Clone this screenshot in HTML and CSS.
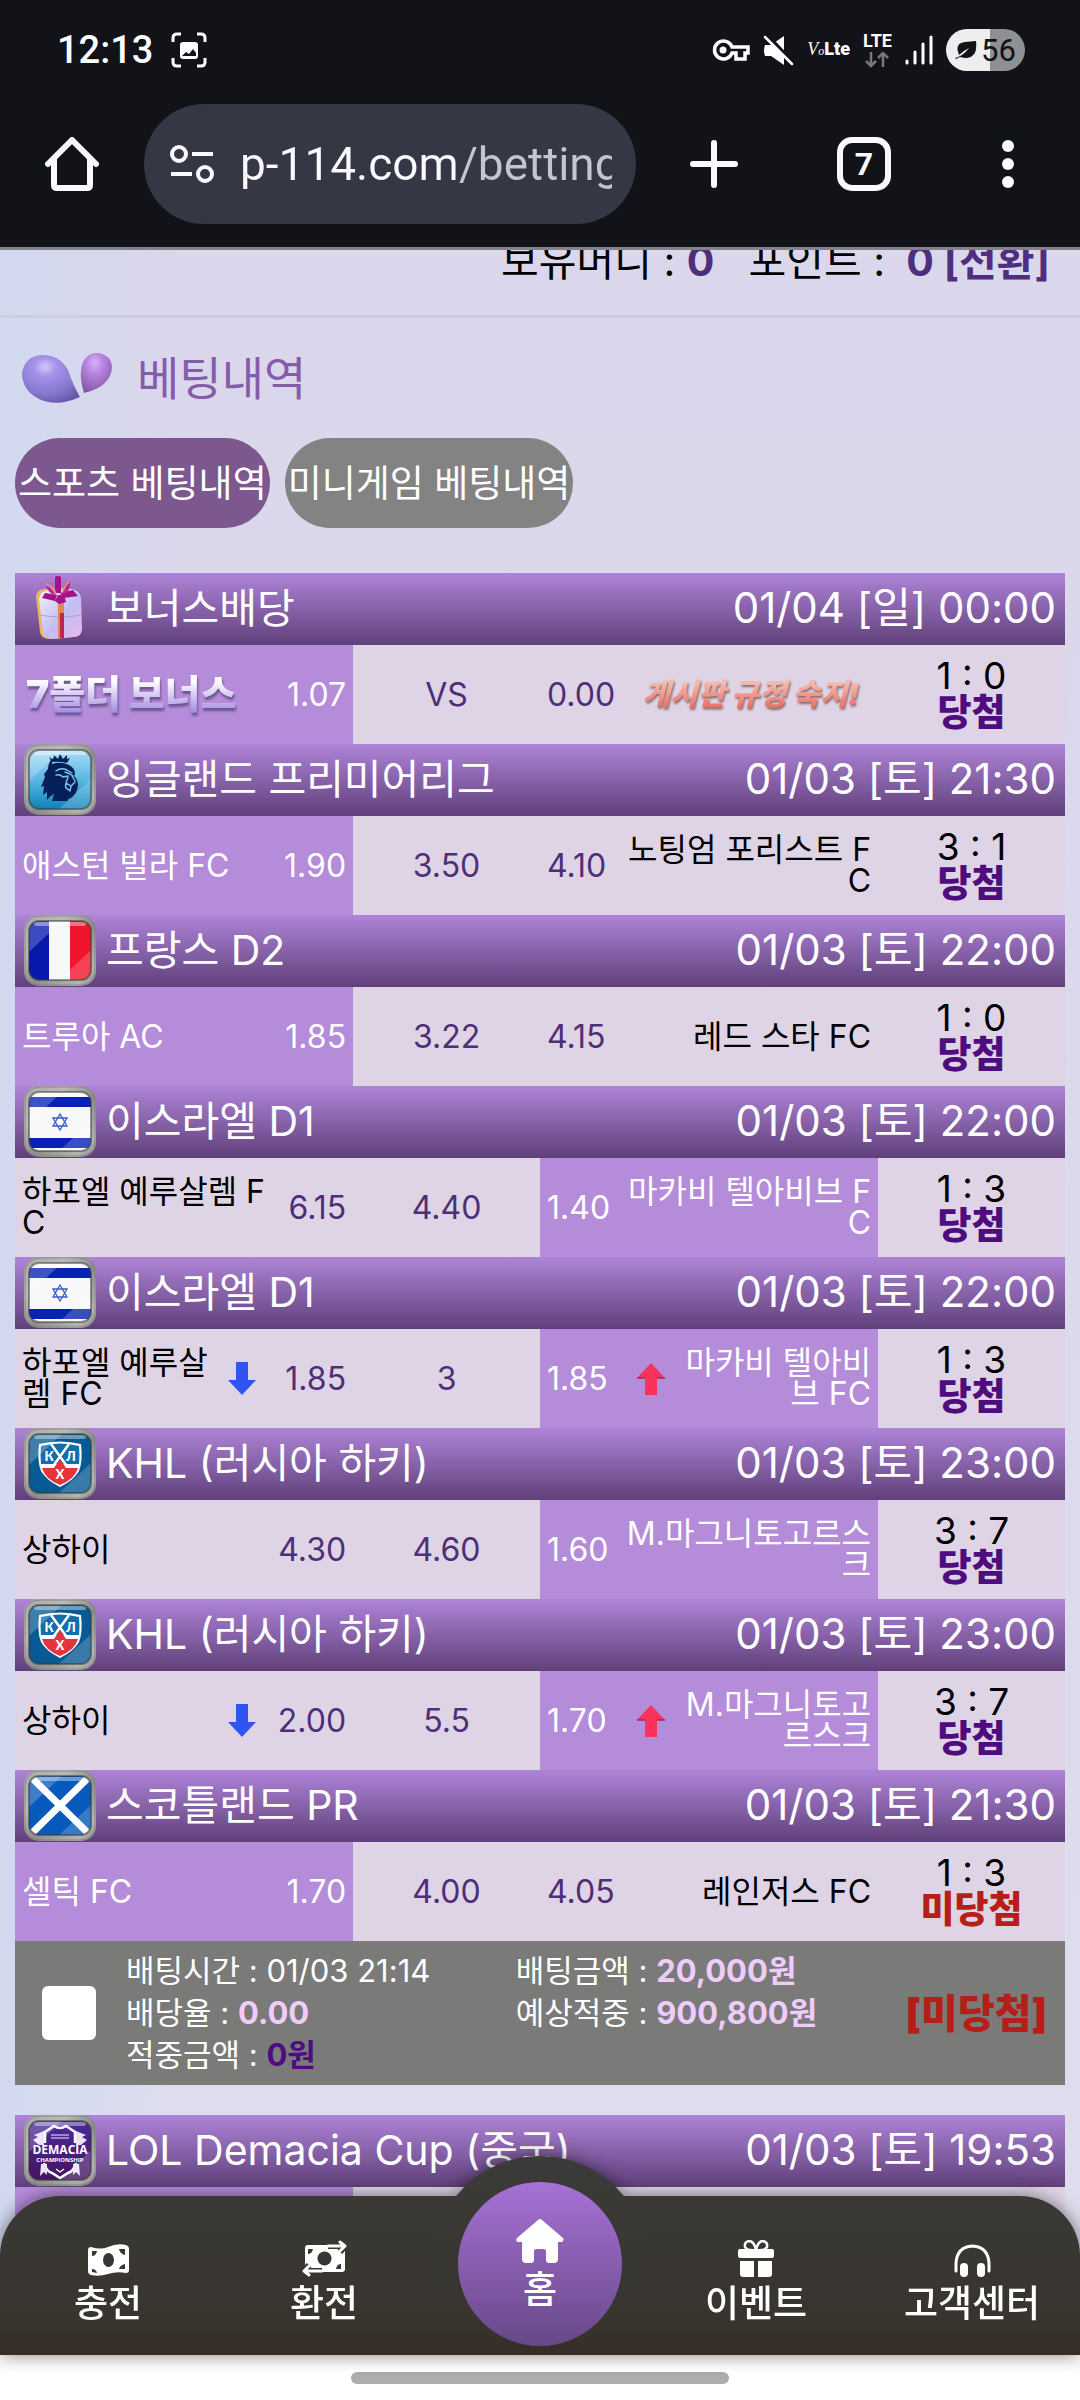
FILE: index.html
```html
<!DOCTYPE html>
<html lang="ko">
<head>
    <meta charset="UTF-8">
    <meta name="viewport" content="width=device-width, initial-scale=1.0">
    <title>베팅내역</title>
    <link rel="stylesheet" href="styles.css">
</head>
<body>
    <!-- shared icons -->
    <svg class="sprite" aria-hidden="true">
        <defs>
            <linearGradient id="frame" x1="0" y1="0" x2="1" y2="1">
                <stop offset="0" stop-color="#a9a9a6"/>
                <stop offset=".3" stop-color="#b9b9b6"/>
                <stop offset=".55" stop-color="#8d8d8b"/>
                <stop offset=".85" stop-color="#b4b4b1"/>
                <stop offset="1" stop-color="#8b8b89"/>
            </linearGradient>
            <linearGradient id="epl-bg" x1="0" y1="0" x2="0" y2="1">
                <stop offset="0" stop-color="#a9dcf8"/>
                <stop offset=".5" stop-color="#5bb7e2"/>
                <stop offset="1" stop-color="#0e82b8"/>
            </linearGradient>
            <linearGradient id="lol-bg" x1="0" y1="0" x2="0" y2="1">
                <stop offset="0" stop-color="#4b2a9b"/>
                <stop offset="1" stop-color="#44145f"/>
            </linearGradient>
            <linearGradient id="box" x1="0" y1="0" x2="1" y2="1">
                <stop offset="0" stop-color="#f4f2fb"/>
                <stop offset=".55" stop-color="#c3bdf3"/>
                <stop offset="1" stop-color="#e9b9ea"/>
            </linearGradient>
            <radialGradient id="drop-blue" cx=".4" cy=".25" r=".8">
                <stop offset="0" stop-color="#d3c8fa"/>
                <stop offset=".25" stop-color="#a592ea"/>
                <stop offset=".7" stop-color="#8677cd"/>
                <stop offset="1" stop-color="#6857a4"/>
            </radialGradient>
            <radialGradient id="drop-pink" cx=".45" cy=".25" r=".8">
                <stop offset="0" stop-color="#d9b0f5"/>
                <stop offset=".35" stop-color="#b784e0"/>
                <stop offset="1" stop-color="#7d559f"/>
            </radialGradient>
            <clipPath id="inner"><rect x="5" y="6" width="62" height="59" rx="10"/></clipPath>
        </defs>
        <symbol id="gloss" viewBox="0 0 72 72">
            <g clip-path="url(#inner)">
                <path d="M5 6h33L5 37z" fill="#fff" opacity=".22"/>
                <path d="M67 35L35 65h32z" fill="#fff" opacity=".2"/>
                <path d="M12 9h48" stroke="#fff" stroke-width="4" stroke-linecap="round" opacity=".4"/>
            </g>
            <rect x="5" y="6" width="62" height="59" rx="10" fill="none" stroke="#333" stroke-width="2" opacity=".5"/>
            <rect x="1" y="1" width="70" height="69" rx="14" fill="none" stroke="#777" stroke-width="1" opacity=".7"/>
        </symbol>
        <symbol id="epl" viewBox="0 0 72 72">
            <rect width="72" height="71" rx="15" fill="url(#frame)"/>
            <rect x="5" y="6" width="62" height="59" rx="10" fill="url(#epl-bg)"/>
            <path d="M27 18l-2-5 4 2 1-4 4 4 2-5 3 5 4-4v4l3-1-3 5q-8-2-16-1z" fill="#051f58"/>
            <path d="M28 20q9-3 17 1 6 3 6 9l-1 2q4 4 4 9-1 9-7 13l-3 1v2H28l2-7q-4 2-7 6v-8l-4 3 1-9-3 1 4-10-1-3 4-5q0-6 4-10z" fill="#051f58"/>
            <path d="M32 27q5-4 11-1l5 3M32 31q4-1 7 2l5-1M41 28q4 1 8 4M44 33l-2 6 5 3 4-4M42 39q-2 5 3 7M48 32l3 5M47 42l-1 5" fill="none" stroke="#7cc6ea" stroke-width="1.4" stroke-linecap="round"/>
            <use href="#gloss" width="72" height="72"/>
        </symbol>
        <symbol id="france" viewBox="0 0 72 72">
            <rect width="72" height="71" rx="15" fill="url(#frame)"/>
            <g clip-path="url(#inner)">
                <path d="M5 6h20v59H5z" fill="#0619ab"/>
                <path d="M25 6h21v59H25z" fill="#f7f7f7"/>
                <path d="M46 6h21v59H46z" fill="#f0152a"/>
            </g>
            <use href="#gloss" width="72" height="72"/>
        </symbol>
        <symbol id="israel" viewBox="0 0 72 72">
            <rect width="72" height="71" rx="15" fill="url(#frame)"/>
            <g clip-path="url(#inner)">
                <path d="M5 6h62v59H5z" fill="#f8f8f8"/>
                <path d="M5 11h62v10H5zM5 52h62v10H5z" fill="#0722b4"/>
            </g>
            <path d="M36 28l7 12H29zM36 44l-7-12h14z" fill="none" stroke="#3c5cc4" stroke-width="1.3"/>
            <use href="#gloss" width="72" height="72"/>
        </symbol>
        <symbol id="scotland" viewBox="0 0 72 72">
            <rect width="72" height="71" rx="15" fill="url(#frame)"/>
            <g clip-path="url(#inner)">
                <path d="M5 6h62v59H5z" fill="#0759bb"/>
                <path d="M7 7l58 57M65 7L7 64" stroke="#fff" stroke-width="7"/>
            </g>
            <use href="#gloss" width="72" height="72"/>
        </symbol>
        <symbol id="khl" viewBox="0 0 72 72">
            <rect width="72" height="71" rx="15" fill="url(#frame)"/>
            <rect x="5" y="6" width="62" height="59" rx="10" fill="#075a93"/>
            <path d="M15 16q21-5 42 0 2 17-2 27-5 9-19 16-14-7-19-16-4-10-2-27z" fill="#fff"/>
            <path d="M17 18q19-5 38 0 1 9 0 18H17q-1-9 0-18z" fill="#126eac"/>
            <path d="M27 16l18 25M45 16L27 41" stroke="#fff" stroke-width="2.5"/>
            <path d="M18 40h12l6-9 6 9h12q-3 11-18 17-15-6-18-17z" fill="#e5333b"/>
            <use href="#gloss" width="72" height="72"/>
        </symbol>
        <symbol id="demacia" viewBox="0 0 72 72">
            <rect width="72" height="71" rx="15" fill="url(#frame)"/>
            <rect x="5" y="6" width="62" height="59" rx="10" fill="url(#lol-bg)"/>
            <path d="M21 28V17l9-6q6 4 12 0l9 6v11M20 48q2 8 8 10l8 5 8-5q6-2 8-10" fill="none" stroke="#fff" stroke-width="2.5"/>
            <path d="M20 16l-10 4 4 2-5 3 6 5h5zM52 16l10 4-4 2 5 3-6 5h-5zM17 49h6v11l-3-3-4 4zM55 49h-6v11l3-3 4 4z" fill="#e9e3f5"/>
            <path d="M27 20h18M27 23h18" stroke="#b9a7dd" stroke-width="1.5"/>
            <path d="M32 54l4 3 4-3" fill="none" stroke="#fff" stroke-width="1.2"/>
            <use href="#gloss" width="72" height="72"/>
        </symbol>
        <symbol id="gift-box" viewBox="0 0 72 72">
            <path d="M12 23q1-7 9-7l22-1q9 1 11 8l3 33q0 7-8 8l-23 2q-9 0-10-7z" fill="#e9b765"/>
            <path d="M15 26q1-8 10-9l22-1q9 1 10 9l1 31q0 7-8 8l-21 2q-9 0-10-7z" fill="url(#box)"/>
            <path d="M15 42q22 4 43 0" fill="none" stroke="#aaa2d8"/>
            <path d="M34 26h6v39h-6z" fill="#bd2748"/>
            <path d="M34 26h2v39h-2zM34 28h6v12h-6z" fill="#dc8a55"/>
            <path d="M31 4q3-2 6 0v16h-6zM34 22l-13-2-3 5 13 3zM36 20l13-3 5 6-14 2zM33 22h7l2 7-7 2-4-3z" fill="#a31287"/>
            <path d="M22 12q4-3 8 5l2 5q-8-1-10-10zM46 9q-5-1-7 7v6q8-4 7-13z" fill="#b8249a"/>
            <path d="M22 11q6 2 10 10M45 9q-4 3-6 9" stroke="#ea8d7d" stroke-width="2" fill="none"/>
        </symbol>
        <symbol id="arrow-down" viewBox="0 0 28 33">
            <path d="M8 0h12v18h8L14 33 0 18h8z" fill="#3054f2"/>
        </symbol>
        <symbol id="arrow-up" viewBox="0 0 28 33">
            <path d="M8 33h12V16h8L14 1 0 16h8z" fill="#f9335c"/>
            <path d="M0 16h8M20 16h8" stroke="#9e2a63" stroke-width="1.5"/>
        </symbol>
    </svg>

    <header class="browser">
        <div class="status-bar">
            <div class="status-left">
                <span class="clock">12:13</span>
                <svg width="36" height="36" viewBox="0 0 36 36">
                    <path d="M2 10V6q0-4 4-4h4M26 2h4q4 0 4 4v4M34 26v4q0 4-4 4h-4M10 34H6q-4 0-4-4v-4" fill="none" stroke="#fff" stroke-width="3"/>
                    <rect x="9" y="10" width="18" height="17" rx="3" fill="#fff"/>
                    <path d="M11 24l4-4 3 2 4-5 3 4v3z" fill="#111318"/>
                </svg>
            </div>
            <div class="status-right">
                <svg width="38" height="24" viewBox="0 0 38 24">
                    <path d="M20 9a9 9 0 1 0 0 6h4v6h9v-6h3V9z" fill="none" stroke="#fff" stroke-width="3.5"/>
                    <circle cx="11" cy="12" r="3.5" fill="#fff"/>
                </svg>
                <svg width="31" height="31" viewBox="0 0 31 31">
                    <path d="M2 10h6l13-9v29L8 21H2q-2-5 0-11z" fill="#fff"/>
                    <path d="M3 -1l28 30" stroke="#111318" stroke-width="4"/>
                    <path d="M2 2l27 27" stroke="#fff" stroke-width="2.5" stroke-linecap="round"/>
                </svg>
                <span class="volte"><i>V<small>o</small></i><b>Lte</b></span>
                <span class="lte">
                    LTE
                    <svg width="24" height="16" viewBox="0 0 24 16">
                        <path d="M6 0v14M1 9l5 5 5-5M18 15V1M13 6l5-5 5 5" fill="none" stroke="#77787c" stroke-width="2.5"/>
                    </svg>
                </span>
                <svg width="28" height="30" viewBox="0 0 28 30">
                    <path d="M2 26v2M10 17v11M18 9v19M26 2v26" stroke="#fff" stroke-width="3" stroke-linecap="round"/>
                </svg>
                <span class="battery">
                    <svg width="22" height="20" viewBox="0 0 22 20">
                        <path d="M21 1q2 16-9 17-4 0-7-1l-4 2-1-1Q8 16 14 8 8 11 4 15-1 3 10 2z" fill="#111318"/>
                    </svg>
                    56
                </span>
            </div>
        </div>
        <div class="toolbar">
            <button class="icon-btn" aria-label="홈">
                <svg width="54" height="54" viewBox="0 0 54 54">
                    <path d="M3 27L27 3l24 24M9 22v26q0 3 3 3h30q3 0 3-3V22" fill="none" stroke="#fbf9ff" stroke-width="6" stroke-linejoin="round" stroke-linecap="round"/>
                </svg>
            </button>
            <label class="address">
                <svg width="46" height="40" viewBox="0 0 46 40">
                    <g fill="none" stroke="#fbf9ff" stroke-width="4">
                        <circle cx="10" cy="10" r="7"/>
                        <path d="M23 10h21M2 30h21"/>
                        <circle cx="36" cy="30" r="7"/>
                    </g>
                </svg>
                <input type="text" value="p-114.com/betting" aria-label="주소">
            </label>
            <div class="toolbar-actions">
                <button class="icon-btn" aria-label="새 탭">
                    <svg width="48" height="48" viewBox="0 0 48 48">
                        <path d="M24 3v42M3 24h42" stroke="#fbf9ff" stroke-width="6" stroke-linecap="round"/>
                    </svg>
                </button>
                <button class="icon-btn tab-count">7</button>
                <button class="icon-btn" aria-label="메뉴">
                    <svg width="36" height="48" viewBox="0 0 36 48">
                        <g fill="#fbf9ff"><circle cx="18" cy="6" r="6"/><circle cx="18" cy="24" r="6"/><circle cx="18" cy="42" r="6"/></g>
                    </svg>
                </button>
            </div>
        </div>
    </header>

    <div class="balance">
        <span>보유머니 : <b>0</b></span>
        <span>포인트 : <b>&nbsp;0 <a href="#">[전환]</a></b></span>
    </div>

    <main>
        <div class="page-title">
            <svg width="90" height="50" viewBox="0 0 90 50">
                <path d="M58 44Q38 53 22 48 0 40 0 20 3 3 20 2q18 0 26 15 5 15 12 27z" fill="url(#drop-blue)"/>
                <path d="M62 40Q56 20 61 9 66-1 77 0q13 3 13 15-2 19-28 25z" fill="url(#drop-pink)"/>
            </svg>
            <h1>베팅내역</h1>
        </div>

        <div class="tabs">
            <button class="tab active">스포츠 베팅내역</button>
            <button class="tab">미니게임 베팅내역</button>
        </div>

        <section class="slip">
            <table class="bets">
                <colgroup><col class="team-col"><col class="draw-col"><col class="team-col"><col class="draw-col"></colgroup>
                <tr class="league">
                    <th colspan="4"><div class="league-bar"><svg class="badge"><use href="#gift-box"/></svg><span class="league-name">보너스배당</span><time>01/04 [일] 00:00</time></div></th>
                </tr>
                <tr class="match">
                    <td class="picked"><div class="side"><span class="name bonus">7폴더 보너스</span><span class="odds">1.07</span></div></td>
                    <td class="draw">VS</td>
                    <td><div class="side away"><span class="odds">0.00</span><span class="name notice">게시판 규정 숙지!</span></div></td>
                    <td class="result">1 : 0<strong class="win">당첨</strong></td>
                </tr>
                <tr class="league">
                    <th colspan="4"><div class="league-bar"><svg class="badge"><use href="#epl"/></svg><span class="league-name">잉글랜드 프리미어리그</span><time>01/03 [토] 21:30</time></div></th>
                </tr>
                <tr class="match">
                    <td class="picked"><div class="side"><span class="name">애스턴 빌라 FC</span><span class="odds">1.90</span></div></td>
                    <td class="draw">3.50</td>
                    <td><div class="side away"><span class="odds">4.10</span><span class="name">노팅엄 포리스트 FC</span></div></td>
                    <td class="result">3 : 1<strong class="win">당첨</strong></td>
                </tr>
                <tr class="league">
                    <th colspan="4"><div class="league-bar"><svg class="badge"><use href="#france"/></svg><span class="league-name">프랑스 D2</span><time>01/03 [토] 22:00</time></div></th>
                </tr>
                <tr class="match">
                    <td class="picked"><div class="side"><span class="name">트루아 AC</span><span class="odds">1.85</span></div></td>
                    <td class="draw">3.22</td>
                    <td><div class="side away"><span class="odds">4.15</span><span class="name">레드 스타 FC</span></div></td>
                    <td class="result">1 : 0<strong class="win">당첨</strong></td>
                </tr>
                <tr class="league">
                    <th colspan="4"><div class="league-bar"><svg class="badge"><use href="#israel"/></svg><span class="league-name">이스라엘 D1</span><time>01/03 [토] 22:00</time></div></th>
                </tr>
                <tr class="match">
                    <td><div class="side"><span class="name">하포엘 예루살렘 FC</span><span class="odds">6.15</span></div></td>
                    <td class="draw">4.40</td>
                    <td class="picked"><div class="side away"><span class="odds">1.40</span><span class="name">마카비 텔아비브 FC</span></div></td>
                    <td class="result">1 : 3<strong class="win">당첨</strong></td>
                </tr>
                <tr class="league">
                    <th colspan="4"><div class="league-bar"><svg class="badge"><use href="#israel"/></svg><span class="league-name">이스라엘 D1</span><time>01/03 [토] 22:00</time></div></th>
                </tr>
                <tr class="match">
                    <td><div class="side"><span class="name short">하포엘 예루살렘 FC</span><svg class="arrow"><use href="#arrow-down"/></svg><span class="odds">1.85</span></div></td>
                    <td class="draw">3</td>
                    <td class="picked"><div class="side away"><span class="odds">1.85</span><svg class="arrow"><use href="#arrow-up"/></svg><span class="name short">마카비 텔아비브 FC</span></div></td>
                    <td class="result">1 : 3<strong class="win">당첨</strong></td>
                </tr>
                <tr class="league">
                    <th colspan="4"><div class="league-bar"><svg class="badge"><use href="#khl"/><text x="25" y="33" class="badge-letter">К</text><text x="47" y="33" class="badge-letter">Л</text><text x="36" y="51" class="badge-letter">Х</text></svg><span class="league-name">KHL (러시아 하키)</span><time>01/03 [토] 23:00</time></div></th>
                </tr>
                <tr class="match">
                    <td><div class="side"><span class="name">상하이</span><span class="odds">4.30</span></div></td>
                    <td class="draw">4.60</td>
                    <td class="picked"><div class="side away"><span class="odds">1.60</span><span class="name">M.마그니토고르스크</span></div></td>
                    <td class="result">3 : 7<strong class="win">당첨</strong></td>
                </tr>
                <tr class="league">
                    <th colspan="4"><div class="league-bar"><svg class="badge"><use href="#khl"/><text x="25" y="33" class="badge-letter">К</text><text x="47" y="33" class="badge-letter">Л</text><text x="36" y="51" class="badge-letter">Х</text></svg><span class="league-name">KHL (러시아 하키)</span><time>01/03 [토] 23:00</time></div></th>
                </tr>
                <tr class="match">
                    <td><div class="side"><span class="name short">상하이</span><svg class="arrow"><use href="#arrow-down"/></svg><span class="odds">2.00</span></div></td>
                    <td class="draw">5.5</td>
                    <td class="picked"><div class="side away"><span class="odds">1.70</span><svg class="arrow"><use href="#arrow-up"/></svg><span class="name short">M.마그니토고르스크</span></div></td>
                    <td class="result">3 : 7<strong class="win">당첨</strong></td>
                </tr>
                <tr class="league">
                    <th colspan="4"><div class="league-bar"><svg class="badge"><use href="#scotland"/></svg><span class="league-name">스코틀랜드 PR</span><time>01/03 [토] 21:30</time></div></th>
                </tr>
                <tr class="match">
                    <td class="picked"><div class="side"><span class="name">셀틱 FC</span><span class="odds">1.70</span></div></td>
                    <td class="draw">4.00</td>
                    <td><div class="side away"><span class="odds">4.05</span><span class="name">레인저스 FC</span></div></td>
                    <td class="result">1 : 3<strong class="lose">미당첨</strong></td>
                </tr>
            </table>
            <div class="slip-summary">
                <input type="checkbox" aria-label="선택">
                <div class="slip-info">
                    <span>배팅시간 : 01/03 21:14</span>
                    <span>배팅금액 : <b>20,000원</b></span>
                    <span>배당율 : <b>0.00</b></span>
                    <span>예상적중 : <b>900,800원</b></span>
                    <span>적중금액 : <b class="won">0원</b></span>
                </div>
                <strong class="slip-result">[미당첨]</strong>
            </div>
        </section>

        <section class="slip">
            <table class="bets">
                <colgroup><col class="team-col"><col class="draw-col"><col class="team-col"><col class="draw-col"></colgroup>
                <tr class="league">
                    <th colspan="4"><div class="league-bar"><svg class="badge"><use href="#demacia"/><text x="36" y="39" class="badge-name">DEMACIA</text><text x="36" y="47" class="badge-sub">CHAMPIONSHIP</text></svg><span class="league-name">LOL Demacia Cup (중국)</span><time>01/03 [토] 19:53</time></div></th>
                </tr>
                <tr class="match">
                    <td class="picked"></td>
                    <td></td>
                    <td></td>
                    <td></td>
                </tr>
            </table>
        </section>
    </main>

    <footer class="bottom">
        <nav class="bottom-nav">
            <a href="#">
                <svg width="41" height="33" viewBox="0 0 41 33">
                    <path d="M3 3q10 3 17 0 9-4 18-2 3 1 3 4v21q0 3-3 3-9-2-18 1-9 3-17 1-3-1-3-4V6q0-3 3-3z" fill="#fff"/>
                    <g fill="#383632"><ellipse cx="20.500" cy="16" rx="5.500" ry="7"/><path d="M4 7h5q-1 5-5 5zM37 5h-6q1 5 6 6zM4 25q4 0 5 4l-5-1zM37 20q-5 1-6 5h6z"/></g>
                </svg>
                충전
            </a>
            <a href="#">
                <svg width="45" height="37" viewBox="0 0 45 37">
                    <path d="M6 5h36q1 1 1 3v21q0 3-3 3H6q-3 0-3-3V8q0-3 3-3z" fill="#fff"/>
                    <g fill="#383632"><circle cx="22.500" cy="18.500" r="7"/><path d="M6 9h5q-1 5-5 5zM39 29h-5q1-5 5-5z"/></g>
                    <path d="M26 6h17M38 1l5 5-5 6M20 31H2M7 25l-5 6 5 5" fill="none" stroke="#383632" stroke-width="6"/>
                    <path d="M26 6h17M38 2l5 4-5 5M20 31H2M7 26l-5 5 5 4" fill="none" stroke="#fff" stroke-width="3" stroke-linecap="round" stroke-linejoin="round"/>
                </svg>
                환전
            </a>
            <a href="#" class="home">
                <svg width="48" height="44" viewBox="0 0 48 44">
                    <path d="M22 1q2-2 4 0l21 18q1 1 0 3l-1 1h-4v17q0 4-4 4h-5q-3 0-3-3V32q0-2-3-2h-6q-3 0-3 2v9q0 3-3 3h-5q-4 0-4-4V23H2q-3-1-1-4z" fill="#fff"/>
                </svg>
                홈
            </a>
            <a href="#">
                <svg width="36" height="37" viewBox="0 0 36 37">
                    <path d="M18 10q-9 1-11-3-1-5 4-6 5 0 7 9 2-9 7-9 5 1 4 6-2 4-11 3z" fill="none" stroke="#fff" stroke-width="2.500"/>
                    <path d="M2 9h32q2 0 2 2v5q0 2-2 2H2q-2 0-2-2v-5q0-2 2-2zM2 21h14v16H5q-3 0-3-3zM20 21h14v13q0 3-3 3H20z" fill="#fff"/>
                </svg>
                이벤트
            </a>
            <a href="#">
                <svg width="37" height="33" viewBox="0 0 37 33">
                    <path d="M2 27v-8q1-16 16.500-17Q34 3 35 19v8" fill="none" stroke="#fff" stroke-width="3" stroke-linecap="round"/>
                    <rect x="6" y="19" width="8" height="14" rx="4" fill="#fff"/>
                    <rect x="23" y="19" width="8" height="14" rx="4" fill="#fff"/>
                </svg>
                고객센터
            </a>
        </nav>
        <div class="gesture-bar"><span></span></div>
    </footer>
</body>
</html>
```
FILE: styles.css
```css
* {
    box-sizing: border-box;
}

body {
    margin: 0;
    min-height: 100vh;
    font-family: Inter, "Noto Sans CJK KR", sans-serif;
    color: #000;
    background: linear-gradient(to right, #d2d9ef 0, rgba(218, 217, 236, 0) 180px), linear-gradient(#dbd6eb, #dad8ec 35%, #dedeed);
}

button {
    border: none;
    padding: 0;
    background: none;
    font-family: inherit;
    cursor: pointer;
}

a {
    color: inherit;
    text-decoration: none;
}

svg {
    display: block;
    flex-shrink: 0;
}

.sprite {
    position: absolute;
    width: 0;
    height: 0;
}

/* browser chrome */
.browser {
    background-color: #111318;
    border-bottom: 3px solid #83838b;
    color: #fff;
    font-family: Roboto, sans-serif;
}

.status-bar {
    display: flex;
    justify-content: space-between;
    align-items: center;
    height: 100px;
    padding: 0 55px 0 57px;
}

.status-left,
.status-right {
    display: flex;
    align-items: center;
}

.status-left {
    gap: 18px;
}

.status-right {
    gap: 13px;
}

.clock {
    font-size: 38px;
    font-weight: 500;
}

.volte {
    font-size: 18px;
    line-height: 24px;
}

.volte i {
    font-family: "Liberation Serif", serif;
}

.volte b {
    font-weight: 900;
}

.volte small {
    font-size: 12px;
}

.lte {
    display: flex;
    flex-direction: column;
    align-items: center;
    gap: 2px;
    font-size: 18px;
    font-weight: 700;
    line-height: 18px;
}

.battery {
    display: flex;
    align-items: center;
    justify-content: center;
    gap: 4px;
    width: 79px;
    height: 42px;
    border-radius: 21px;
    background: linear-gradient(to right, #eee 56%, #8f9092 56%);
    color: #111318;
    font-size: 31px;
}

.toolbar {
    display: flex;
    align-items: center;
    height: 147px;
    padding: 4px 54px 23px 45px;
    gap: 45px;
}

.address {
    display: flex;
    align-items: center;
    flex: 1;
    gap: 25px;
    min-width: 0;
    height: 120px;
    padding: 0 24px 0 25px;
    border-radius: 60px;
    background-color: #353745;
}

.address input {
    flex: 1;
    min-width: 0;
    padding: 0;
    border: none;
    outline: none;
    font: 46px/60px Roboto, sans-serif;
    color: transparent;
    background: linear-gradient(to right, #fbf9ff 215px, #c4c5d0 215px);
    -webkit-background-clip: text;
    background-clip: text;
}

.toolbar-actions {
    display: flex;
    align-items: center;
    gap: 99px;
    margin-left: 9px;
}

.tab-count {
    width: 54px;
    height: 54px;
    border: 6px solid #fbf9ff;
    border-radius: 15px;
    color: #fbf9ff;
    font-size: 32px;
    font-weight: 700;
    line-height: 42px;
}

/* account line, scrolled half under the toolbar */
.balance {
    display: flex;
    justify-content: flex-end;
    align-items: flex-end;
    gap: 34px;
    height: 68px;
    padding: 0 30px 34px;
    overflow: hidden;
    border-bottom: 3px solid #cfcbe0;
    font-size: 41px;
    line-height: 40px;
    white-space: nowrap;
}

.balance b {
    color: #4f2d7f;
    font-weight: 700;
}

main {
    padding: 0 15px;
}

.page-title {
    display: flex;
    align-items: center;
    gap: 25px;
    height: 120px;
    padding-left: 7px;
}

.page-title h1 {
    margin: 0;
    color: #855bab;
    font-size: 46px;
    font-weight: 400;
    line-height: 60px;
}

.tabs {
    display: flex;
    gap: 15px;
    margin-bottom: 45px;
}

.tab {
    height: 90px;
    padding: 0 3px 4px;
    border-radius: 45px;
    background-color: #838383;
    color: #fff;
    font-size: 37px;
    white-space: nowrap;
}

.tab.active {
    background-color: #7c588f;
}

/* betting slips */
.slip {
    margin-bottom: 30px;
}

.bets {
    width: 100%;
    table-layout: fixed;
    border-collapse: collapse;
}

.bets th,
.bets td {
    padding: 0;
    font-weight: 400;
}

.team-col {
    width: 32.2%;
}

.draw-col {
    width: 17.8%;
}

.league {
    background: linear-gradient(#ae84d8, #60407a);
    color: #fff;
}

.league-bar {
    display: flex;
    align-items: center;
    height: 72px;
    padding: 0 9px;
    font-size: 41px;
    line-height: 60px;
    text-align: left;
}

.badge {
    width: 72px;
    height: 72px;
    margin-right: 10px;
}

.badge-letter {
    fill: #fff;
    font: 900 13px Lato, sans-serif;
    text-anchor: middle;
}

.badge-name {
    fill: #fff;
    font: 700 12px "Open Sans", sans-serif;
    text-anchor: middle;
}

.badge-sub {
    fill: #fff;
    font: 700 6px "Open Sans", sans-serif;
    text-anchor: middle;
}

.league-name,
.league time {
    padding-bottom: 3px;
}

.league-name {
    flex: 1;
}

.league time {
    font-size: 42px;
}

.match {
    height: 99px;
    background-color: #dfd4e6;
}

.match .picked {
    background-color: #b48cd9;
}

.side {
    display: flex;
    align-items: center;
    justify-content: space-between;
    padding: 0 7px 1px;
}

.name {
    max-width: 248px;
    font-size: 32px;
    line-height: 31px;
    word-break: break-all;
}

.name.short {
    width: 190px;
}

.away .name {
    text-align: right;
}

.arrow {
    width: 28px;
    height: 33px;
    margin: 0 auto 0 16px;
}

.away .arrow {
    margin: 0 16px 0 auto;
}

.odds,
.draw {
    color: #4e2f77;
    font-size: 32px;
}

.draw {
    text-align: center;
}

.picked .name,
.picked .odds {
    color: #fff;
}

.side .name.bonus {
    padding-left: 4px;
    background: linear-gradient(#fff 20%, #a78fe6 90%);
    -webkit-background-clip: text;
    background-clip: text;
    color: transparent;
    font-size: 39px;
    font-weight: 900;
    line-height: 44px;
    white-space: nowrap;
    filter: drop-shadow(1px 3px 1px #6b568f);
}

.side .name.notice {
    padding-right: 12px;
    background: linear-gradient(#f5b9ab 20%, #e86f62 90%);
    -webkit-background-clip: text;
    background-clip: text;
    color: transparent;
    font-size: 30px;
    font-style: italic;
    font-weight: 900;
    line-height: 36px;
    white-space: nowrap;
    filter: drop-shadow(1px 2px 1px #8a6a70);
}

.bets .result {
    padding-bottom: 2px;
    font-size: 37px;
    line-height: 37px;
    text-align: center;
}

.result strong {
    display: block;
    font-size: 37px;
    font-weight: 900;
}

.win {
    color: #4e0c7f;
}

.lose,
.slip-result {
    color: #b61e19;
}

.slip-summary {
    display: flex;
    align-items: center;
    height: 144px;
    padding: 0 18px 0 27px;
    background-color: #7a7a78;
    color: #fff;
}

.slip-summary input {
    appearance: none;
    width: 54px;
    height: 54px;
    margin: 0 30px 0 0;
    border-radius: 6px;
    background-color: #fff;
}

.slip-info {
    display: grid;
    grid-template-columns: 1fr 1fr;
    flex: 1;
    font-size: 31px;
    line-height: 42px;
}

.slip-info b {
    color: #eeccfb;
    font-weight: 700;
}

.slip-info .won {
    color: #4e0c7f;
}

.slip-result {
    padding-bottom: 4px;
    font-size: 40px;
    font-weight: 900;
}

/* bottom menu */
.bottom {
    position: fixed;
    left: 0;
    right: 0;
    bottom: 0;
}

.bottom-nav {
    display: grid;
    grid-template-columns: repeat(5, 1fr);
    height: 159px;
    border-radius: 60px 60px 0 0;
    background: linear-gradient(#3b3936, #38352f 75%, #352d28);
    filter: drop-shadow(0 0 9px rgba(0, 0, 0, 0.5));
}

.bottom-nav a {
    display: flex;
    flex-direction: column;
    align-items: center;
    justify-content: flex-end;
    gap: 6px;
    padding-bottom: 30px;
    color: #fff;
    font-size: 37px;
    font-weight: 500;
    line-height: 42px;
}

/* raised round button in the middle of the bar */
.bottom-nav .home {
    position: relative;
    z-index: 0;
    padding-bottom: 44px;
}

.home::before,
.home::after {
    content: "";
    position: absolute;
    left: 50%;
    border-radius: 50%;
    transform: translateX(-50%);
}

.home::before {
    z-index: -2;
    top: -40px;
    width: 216px;
    height: 216px;
    background: linear-gradient(#3b3b39, #38352f 75%, transparent 75%);
}

.home::after {
    z-index: -1;
    top: -14px;
    width: 164px;
    height: 164px;
    background: linear-gradient(#a672d6, #684888);
}

.gesture-bar {
    display: flex;
    justify-content: center;
    align-items: flex-start;
    height: 45px;
    padding-top: 17px;
    background-color: #fff;
}

.gesture-bar span {
    width: 35%;
    height: 12px;
    border-radius: 6px;
    background-color: #adadad;
}
```
